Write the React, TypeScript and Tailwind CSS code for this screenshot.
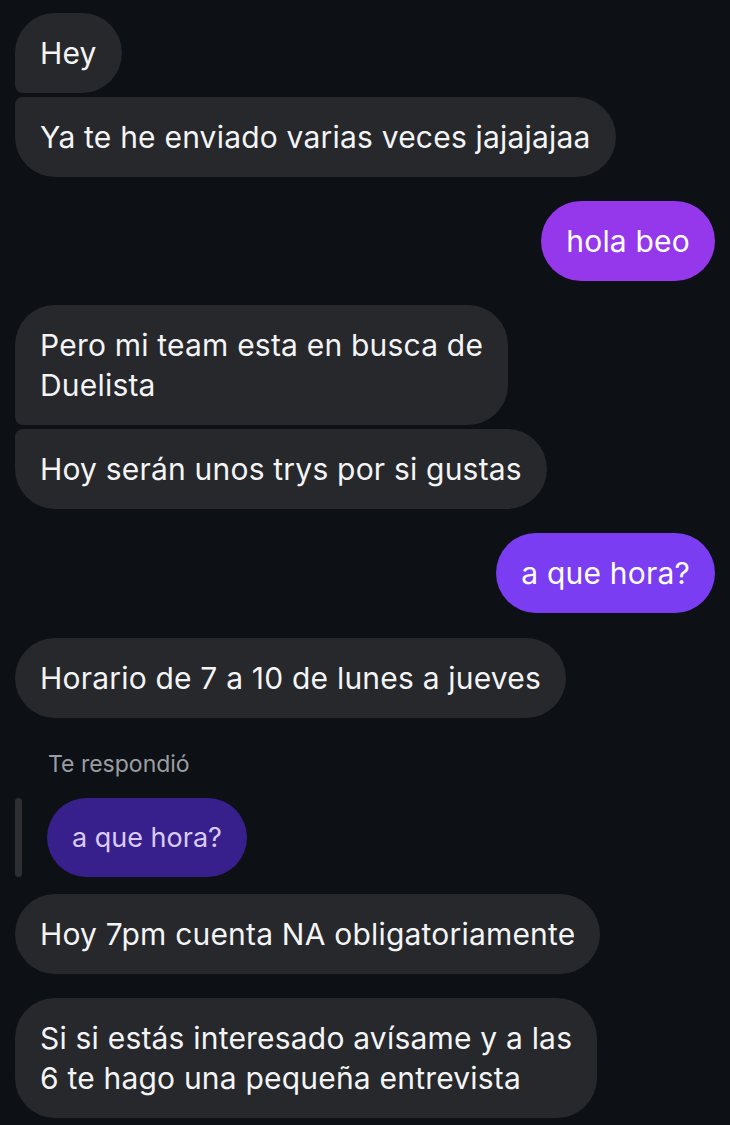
const font = { fontFamily: "Inter, 'Noto Sans', sans-serif" };

type Pos = "single" | "first" | "last";

const Incoming = ({ text, pos = "single" }: { text: React.ReactNode; pos?: Pos }) => {
  const corners =
    pos === "first"
      ? "rounded-[40px] rounded-bl-[8px]"
      : pos === "last"
      ? "rounded-[40px] rounded-tl-[8px]"
      : "rounded-[40px]";
  return (
    <div className="flex justify-start">
      <div
        className={`bg-[#26282c] text-[#f4f4f5] text-[30px] leading-[40px] tracking-[0.2px] px-[25px] py-[20px] max-w-[620px] ${corners}`}
      >
        {text}
      </div>
    </div>
  );
};

const Outgoing = ({ text, color }: { text: string; color: string }) => (
  <div className="flex justify-end">
    <div
      className={`${color} text-white text-[30px] leading-[40px] tracking-[0.2px] px-[25px] py-[20px] rounded-[40px]`}
    >
      {text}
    </div>
  </div>
);

export default function App() {
  return (
    <div className="min-h-[1125px] w-[730px] bg-[#0d1014] px-[15px] pt-[13px]" style={font}>
      <div className="flex flex-col gap-[4px]">
        <Incoming text="Hey" pos="first" />
        <Incoming text="Ya te he enviado varias veces jajajajaa" pos="last" />
      </div>

      <div className="mt-[24px]">
        <Outgoing text="hola beo" color="bg-[#9537eb]" />
      </div>

      <div className="mt-[24px] flex flex-col gap-[4px]">
        <Incoming
          pos="first"
          text={
            <>
              Pero mi team esta en busca de
              <br />
              Duelista
            </>
          }
        />
        <Incoming text="Hoy serán unos trys por si gustas" pos="last" />
      </div>

      <div className="mt-[24px]">
        <Outgoing text="a que hora?" color="bg-[#7b3df2]" />
      </div>

      <div className="mt-[25px]">
        <Incoming text="Horario de 7 a 10 de lunes a jueves" />
      </div>

      <div className="mt-[33px] pl-[33px] text-[23px] leading-[26px] text-[#9a9da3]">Te respondió</div>

      <div className="mt-[21px] flex items-stretch gap-[25px]">
        <div className="w-[7px] rounded-full bg-[#2d2f33]" />
        <div className="bg-[#38208c] text-[#d9ccfb] text-[27px] leading-[39px] px-[25px] py-[20px] rounded-[40px]">
          a que hora?
        </div>
      </div>

      <div className="mt-[17px] flex flex-col gap-[24px] pb-[8px]">
        <Incoming text="Hoy 7pm cuenta NA obligatoriamente" />
        <Incoming
          text={
            <>
              Si si estás interesado avísame y a las
              <br />6 te hago una pequeña entrevista
            </>
          }
        />
      </div>
    </div>
  );
}
